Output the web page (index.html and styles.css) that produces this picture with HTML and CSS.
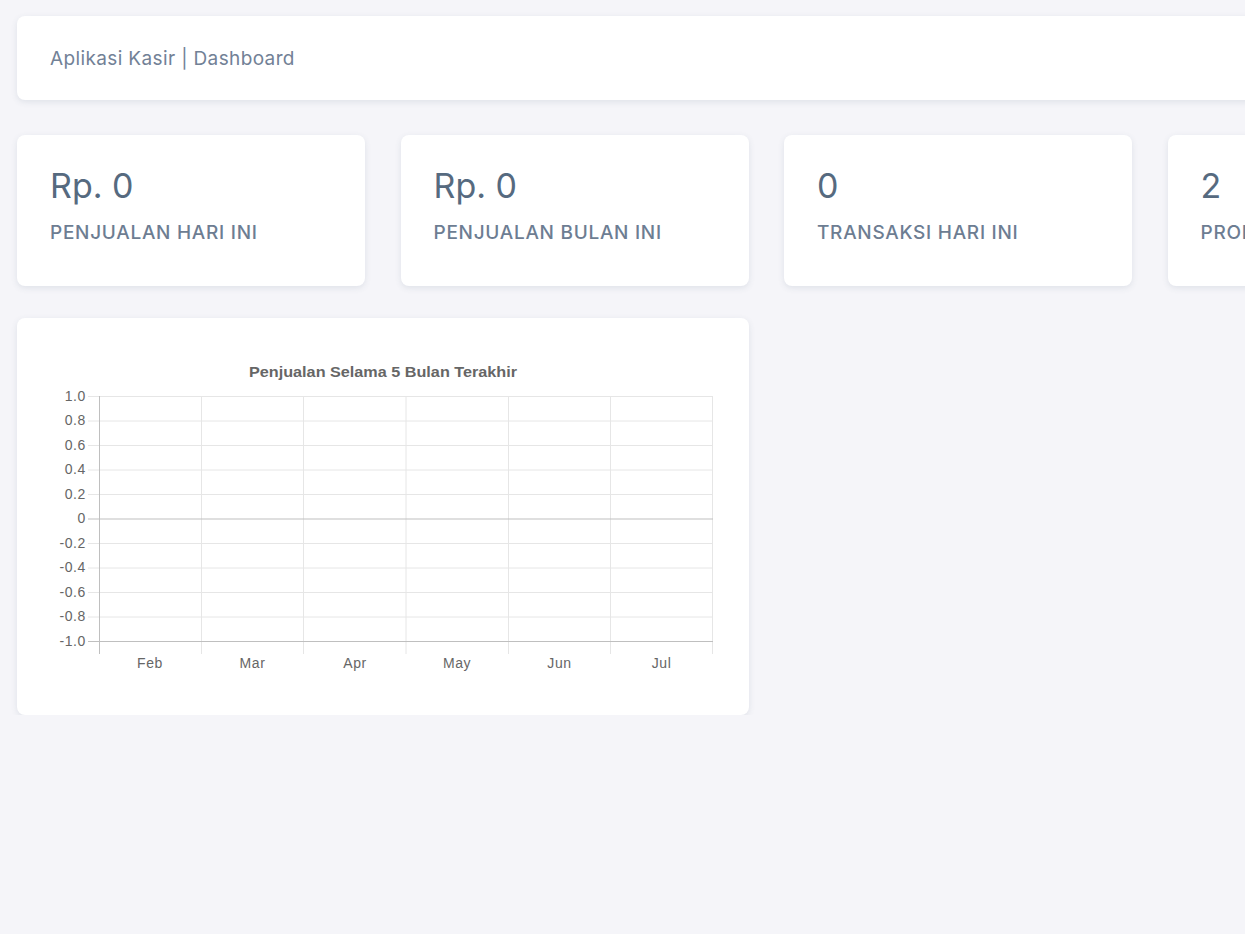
FILE: index.html
```html
<!DOCTYPE html>
<html lang="id">
<head>
<meta charset="utf-8">
<title>Aplikasi Kasir | Dashboard</title>
<link rel="stylesheet" href="styles.css">
</head>
<body>
<div class="page">
  <header class="card topbar">
    <span class="brand">Aplikasi Kasir | Dashboard</span>
  </header>

  <section class="stats">
    <div class="card stat">
      <div class="stat-value">Rp. 0</div>
      <div class="stat-label">Penjualan Hari Ini</div>
    </div>
    <div class="card stat">
      <div class="stat-value">Rp. 0</div>
      <div class="stat-label">Penjualan Bulan Ini</div>
    </div>
    <div class="card stat">
      <div class="stat-value">0</div>
      <div class="stat-label">Transaksi Hari Ini</div>
    </div>
    <div class="card stat">
      <div class="stat-value">2</div>
      <div class="stat-label">Produk</div>
    </div>
  </section>

  <section class="charts">
    <div class="card chart-card">
      <svg class="chart" width="732" height="397" viewBox="0 0 732 397">
        <text class="chart-title" x="366" y="59" text-anchor="middle" textLength="268" lengthAdjust="spacingAndGlyphs">Penjualan Selama 5 Bulan Terakhir</text>
        <g class="grid">
          <line x1="71" y1="78.5" x2="696" y2="78.5"/>
          <line x1="71" y1="103" x2="696" y2="103"/>
          <line x1="71" y1="127.5" x2="696" y2="127.5"/>
          <line x1="71" y1="152" x2="696" y2="152"/>
          <line x1="71" y1="176.5" x2="696" y2="176.5"/>
          <line x1="71" y1="225.5" x2="696" y2="225.5"/>
          <line x1="71" y1="250" x2="696" y2="250"/>
          <line x1="71" y1="274.5" x2="696" y2="274.5"/>
          <line x1="71" y1="299" x2="696" y2="299"/>
          <line x1="184.5" y1="78" x2="184.5" y2="336"/>
          <line x1="286.5" y1="78" x2="286.5" y2="336"/>
          <line x1="389" y1="78" x2="389" y2="336"/>
          <line x1="491.5" y1="78" x2="491.5" y2="336"/>
          <line x1="593.5" y1="78" x2="593.5" y2="336"/>
          <line x1="695.5" y1="78" x2="695.5" y2="336"/>
        </g>
        <g class="axis">
          <line x1="71" y1="201" x2="696" y2="201"/>
          <line x1="71" y1="323.5" x2="696" y2="323.5"/>
          <line x1="82.5" y1="78" x2="82.5" y2="336"/>
        </g>
        <g class="ylabels" text-anchor="end">
          <text x="69" y="82.5">1.0</text>
          <text x="69" y="107">0.8</text>
          <text x="69" y="131.5">0.6</text>
          <text x="69" y="156">0.4</text>
          <text x="69" y="180.5">0.2</text>
          <text x="69" y="205">0</text>
          <text x="69" y="229.5">-0.2</text>
          <text x="69" y="254">-0.4</text>
          <text x="69" y="278.5">-0.6</text>
          <text x="69" y="303">-0.8</text>
          <text x="69" y="327.5">-1.0</text>
        </g>
        <g class="xlabels" text-anchor="middle">
          <text x="133" y="350">Feb</text>
          <text x="235.5" y="350">Mar</text>
          <text x="338" y="350">Apr</text>
          <text x="440" y="350">May</text>
          <text x="542.5" y="350">Jun</text>
          <text x="644.5" y="350">Jul</text>
        </g>
      </svg>
    </div>
  </section>
</div>
</body>
</html>
```

FILE: styles.css
```css
* {
  box-sizing: border-box;
}

html, body {
  margin: 0;
  padding: 0;
  background: #f5f5f9;
  overflow: hidden;
}

body {
  font-family: "Inter", "Noto Sans", "Liberation Sans", sans-serif;
  color: #697a8d;
}

.page {
  width: 1499px;
  padding: 16px 0 0 17px;
  display: flex;
  flex-direction: column;
}

.card {
  background: #ffffff;
  border-radius: 8px;
  box-shadow: 0 2px 6px 0 rgba(67, 89, 113, 0.12);
}

.topbar {
  height: 84px;
  display: flex;
  align-items: center;
  padding: 0 33px;
}

.brand {
  font-size: 19px;
  color: #728196;
  letter-spacing: 0.37px;
}

.stats {
  margin-top: 35px;
  display: grid;
  grid-template-columns: repeat(4, 348px);
  column-gap: 35.5px;
}

.stat {
  height: 151px;
  padding: 30px 33px 0;
  display: flex;
  flex-direction: column;
}

.stat-value {
  font-size: 34px;
  line-height: 42px;
  color: #566a7f;
}

.stat-label {
  margin-top: 14px;
  font-size: 19px;
  line-height: 24px;
  font-weight: 500;
  text-transform: uppercase;
  color: #6d7d92;
  letter-spacing: 0.72px;
}

.charts {
  margin-top: 32px;
  display: grid;
  grid-template-columns: 732px;
}

.chart-card {
  height: 397px;
  overflow: hidden;
}

.chart {
  display: block;
  font-family: "Liberation Sans", Arial, sans-serif;
}

.chart-title {
  font-size: 14px;
  font-weight: 700;
  fill: #666666;
}

.grid line {
  stroke: #e6e6e6;
  stroke-width: 1;
}

.axis line {
  stroke: #bfbfbf;
  stroke-width: 1;
}

.ylabels text,
.xlabels text {
  font-size: 14px;
  fill: #666666;
  letter-spacing: 0.6px;
}
```
